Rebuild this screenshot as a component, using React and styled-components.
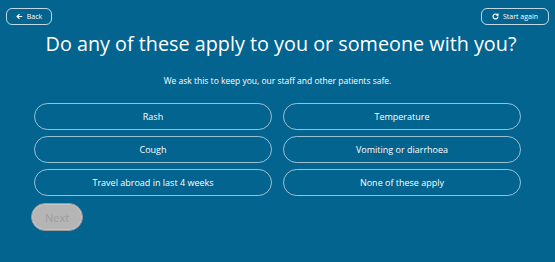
import React from "react";
import styled, { createGlobalStyle } from "styled-components";

const Global = createGlobalStyle`
  html, body { margin: 0; padding: 0; background: #02648f; }
  body { font-family: "Open Sans", "Liberation Sans", sans-serif; color: #fff; }
  * { box-sizing: border-box; }
`;

const Page = styled.div`
  width: 555px;
  height: 262px;
  background: #02648f;
  padding: 8px 6px 0 6px;
  display: flex;
  flex-direction: column;
`;

const TopBar = styled.div`
  display: flex;
  justify-content: space-between;
  height: 17px;
`;

const NavButton = styled.button`
  height: 17px;
  width: ${(p) => p.$w}px;
  border: 1px solid rgba(255,255,255,0.75);
  border-radius: 6px;
  background: transparent;
  color: #fff;
  font-family: inherit;
  font-size: 7px;
  display: flex;
  align-items: center;
  justify-content: center;
  gap: 4px;
  padding: 0;
`;

const Title = styled.h1`
  margin: 5px 0 0 0;
  padding-left: 7px;
  font-size: 19.8px;
  font-weight: 400;
  text-align: center;
  line-height: 28px;
`;

const Sub = styled.p`
  margin: 17px 0 0 0;
  font-size: 8.5px;
  text-align: center;
  line-height: 12px;
`;

const Grid = styled.div`
  margin: 16px 28px 0 28px;
  display: grid;
  grid-template-columns: 238px 238px;
  column-gap: 11px;
  row-gap: 6px;
`;

const Option = styled.button`
  height: 27px;
  border: 1px solid rgba(255,255,255,0.6);
  border-radius: 14px;
  background: transparent;
  color: #fff;
  font-family: inherit;
  font-size: 9px;
  padding: 0;
`;

const Next = styled.button`
  margin: 7px 0 0 25px;
  width: 52px;
  height: 28px;
  border-radius: 14px;
  border: 1px solid #9a9a9a;
  background: #b5b5b5;
  color: #9e9e9e;
  font-family: inherit;
  font-size: 11px;
  padding: 0;
  box-shadow: inset 0 0 0 1px #c6c6c6;
`;

const options = [
  "Rash",
  "Temperature",
  "Cough",
  "Vomiting or diarrhoea",
  "Travel abroad in last 4 weeks",
  "None of these apply",
];

export default function App() {
  return (
    <>
      <Global />
      <Page>
        <TopBar>
          <NavButton $w={46}>
            <svg width="7" height="7" viewBox="0 0 10 10" fill="none" stroke="#fff" strokeWidth="1.6">
              <path d="M9 5H1.5M5 1.5L1.5 5L5 8.5" />
            </svg>
            Back
          </NavButton>
          <NavButton $w={68}>
            <svg width="7" height="7" viewBox="0 0 10 10" fill="none" stroke="#fff" strokeWidth="1.7">
              <path d="M8.5 5A3.5 3.5 0 1 1 7.4 2.4" />
              <path d="M8.6 0.8V3.2H6.2" fill="#fff" />
            </svg>
            Start again
          </NavButton>
        </TopBar>
        <Title>Do any of these apply to you or someone with you?</Title>
        <Sub>We ask this to keep you, our staff and other patients safe.</Sub>
        <Grid>
          {options.map((o) => (
            <Option key={o}>{o}</Option>
          ))}
        </Grid>
        <div>
          <Next disabled>Next</Next>
        </div>
      </Page>
    </>
  );
}
